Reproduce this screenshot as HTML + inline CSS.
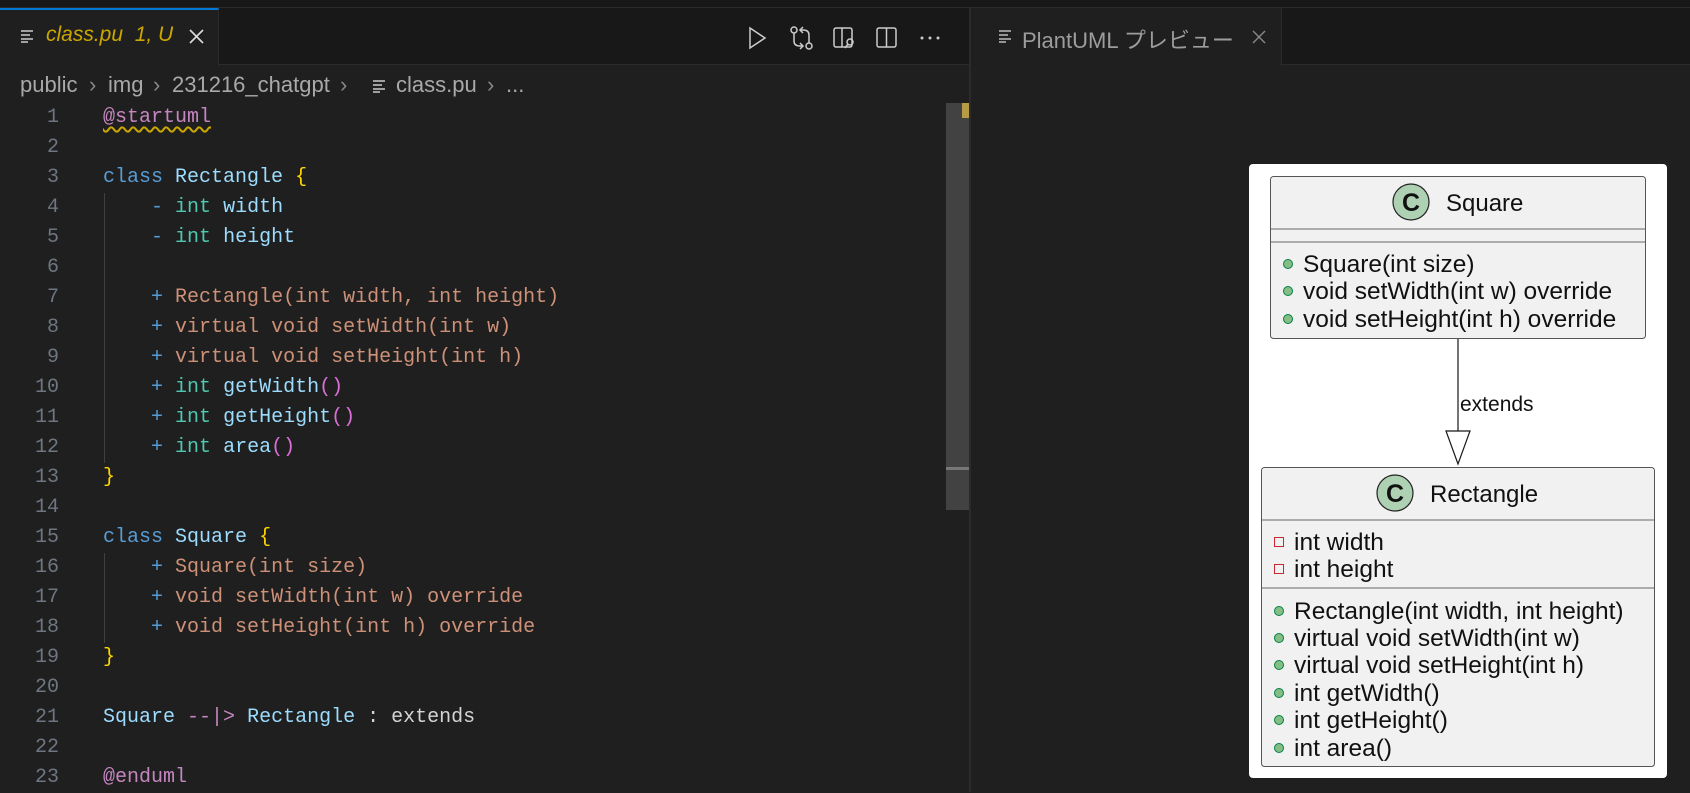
<!DOCTYPE html>
<html><head><meta charset="utf-8"><style>
*{margin:0;padding:0;box-sizing:border-box}
body{width:1690px;height:792px;background:#1f1f1f;overflow:hidden;position:relative;font-family:"Liberation Sans","Noto Sans CJK JP",sans-serif}
.abs{position:absolute}
.code{font-family:"Liberation Mono",monospace;font-size:20px;white-space:pre;color:#d4d4d4;line-height:30px}
.ln{position:absolute;left:0;width:59px;text-align:right;font-family:"Liberation Mono",monospace;font-size:20px;color:#6e7681;line-height:30px}
.k{color:#569cd6}.n{color:#9cdcfe}.b{color:#ffd700}.t{color:#4ec9b0}.s{color:#ce9178}.p{color:#da70d6}.m{color:#c586c0}
.bc{position:absolute;top:72px;font-size:22px;color:#a9a9a9;white-space:pre}
</style></head><body>
<div class="abs" style="left:0;top:0;width:1690px;height:8px;background:#181818;border-bottom:1px solid #2b2b2b"></div>
<div class="abs" style="left:0;top:8px;width:970px;height:57px;background:#181818;border-bottom:1px solid #2b2b2b"></div>
<div class="abs" style="left:970px;top:8px;width:720px;height:57px;background:#181818;border-bottom:1px solid #2b2b2b"></div>
<div class="abs" style="left:0;top:8px;width:219px;height:58px;background:#1f1f1f;border-top:2px solid #0078d4;border-right:1px solid #2b2b2b"></div>
<svg class="abs" style="left:20px;top:29px" width="16" height="14"><g stroke="#ccc" stroke-width="1.5"><line x1="1" y1="2" x2="13" y2="2"/><line x1="1" y1="6" x2="10" y2="6"/><line x1="1" y1="10" x2="13" y2="10"/><line x1="1" y1="13" x2="8" y2="13"/></g></svg>
<div class="abs" style="left:46px;top:23px;font-size:21px;font-style:italic;color:#cca700;white-space:pre">class.pu  1, U</div>
<svg class="abs" style="left:189px;top:29px" width="15" height="15"><g stroke="#ddd" stroke-width="1.6"><line x1="1" y1="1" x2="14" y2="14"/><line x1="14" y1="1" x2="1" y2="14"/></g></svg>
<svg class="abs" style="left:745px;top:25px" width="200" height="26" fill="none" stroke="#ccc" stroke-width="1.5">
<path d="M5 3 L20 13 L5 23 Z"/>
<circle cx="49" cy="5" r="3"/><path d="M49 8 V16 Q49 21 55 21 H58"/><path d="M55 18 L58 21 L55 24"/><circle cx="64" cy="21" r="3"/><path d="M64 18 V10 Q64 5 58 5 H55"/><path d="M58 2 L55 5 L58 8"/>
<rect x="89" y="3" width="18" height="19" rx="2"/><line x1="97" y1="3" x2="97" y2="22"/><circle cx="105" cy="17" r="3"/><line x1="103" y1="19" x2="100" y2="23"/>
<rect x="132" y="3" width="19" height="19" rx="2"/><line x1="141.5" y1="3" x2="141.5" y2="22"/>
<g fill="#ccc" stroke="none"><circle cx="177" cy="13" r="1.5"/><circle cx="185" cy="13" r="1.5"/><circle cx="193" cy="13" r="1.5"/></g>
</svg>
<div class="bc" style="left:20px">public</div>
<div class="bc" style="left:89px;color:#888">›</div>
<div class="bc" style="left:108px">img</div>
<div class="bc" style="left:153px;color:#888">›</div>
<div class="bc" style="left:172px">231216_chatgpt</div>
<div class="bc" style="left:340px;color:#888">›</div>
<div class="bc" style="left:396px">class.pu</div>
<div class="bc" style="left:487px;color:#888">›</div>
<div class="bc" style="left:506px">...</div>
<svg class="abs" style="left:372px;top:79px" width="16" height="14"><g stroke="#ccc" stroke-width="1.5"><line x1="1" y1="2" x2="13" y2="2"/><line x1="1" y1="6" x2="10" y2="6"/><line x1="1" y1="10" x2="13" y2="10"/><line x1="1" y1="13" x2="8" y2="13"/></g></svg>
<div class="abs" style="left:0;top:103px">
<div class="ln" style="top:0">1</div><div class="ln" style="top:30px">2</div><div class="ln" style="top:60px">3</div><div class="ln" style="top:90px">4</div><div class="ln" style="top:120px">5</div><div class="ln" style="top:150px">6</div><div class="ln" style="top:180px">7</div><div class="ln" style="top:210px">8</div><div class="ln" style="top:240px">9</div><div class="ln" style="top:270px">10</div><div class="ln" style="top:300px">11</div><div class="ln" style="top:330px">12</div><div class="ln" style="top:360px">13</div><div class="ln" style="top:390px">14</div><div class="ln" style="top:420px">15</div><div class="ln" style="top:450px">16</div><div class="ln" style="top:480px">17</div><div class="ln" style="top:510px">18</div><div class="ln" style="top:540px">19</div><div class="ln" style="top:570px">20</div><div class="ln" style="top:600px">21</div><div class="ln" style="top:630px">22</div><div class="ln" style="top:660px">23</div>
</div>
<div class="abs" style="left:104px;top:193px;width:1px;height:270px;background:#404040"></div>
<div class="abs" style="left:104px;top:553px;width:1px;height:90px;background:#404040"></div>
<div class="abs code" style="left:103px;top:103px"><span class="m" style="text-decoration:underline wavy #cca700;text-underline-offset:4px">@startuml</span>

<span class="k">class</span> <span class="n">Rectangle</span> <span class="b">{</span>
    <span class="k">-</span> <span class="t">int</span> <span class="n">width</span>
    <span class="k">-</span> <span class="t">int</span> <span class="n">height</span>

    <span class="k">+</span> <span class="s">Rectangle(int width, int height)</span>
    <span class="k">+</span> <span class="s">virtual void setWidth(int w)</span>
    <span class="k">+</span> <span class="s">virtual void setHeight(int h)</span>
    <span class="k">+</span> <span class="t">int</span> <span class="n">getWidth</span><span class="p">()</span>
    <span class="k">+</span> <span class="t">int</span> <span class="n">getHeight</span><span class="p">()</span>
    <span class="k">+</span> <span class="t">int</span> <span class="n">area</span><span class="p">()</span>
<span class="b">}</span>

<span class="k">class</span> <span class="n">Square</span> <span class="b">{</span>
    <span class="k">+</span> <span class="s">Square(int size)</span>
    <span class="k">+</span> <span class="s">void setWidth(int w) override</span>
    <span class="k">+</span> <span class="s">void setHeight(int h) override</span>
<span class="b">}</span>

<span class="n">Square</span> <span class="m">--|&gt;</span> <span class="n">Rectangle</span> : extends

<span class="m">@enduml</span></div>
<div class="abs" style="left:946px;top:103px;width:23px;height:407px;background:#424242"></div>
<div class="abs" style="left:962px;top:103px;width:7px;height:15px;background:#b89b45"></div>
<div class="abs" style="left:946px;top:467px;width:23px;height:3px;background:#777"></div>
<div class="abs" style="left:969px;top:8px;width:2px;height:784px;background:#2b2b2b"></div>
<div class="abs" style="left:971px;top:8px;width:311px;height:58px;background:#1f1f1f;border-right:1px solid #2b2b2b"></div>
<svg class="abs" style="left:998px;top:29px" width="16" height="14"><g stroke="#bbb" stroke-width="1.5"><line x1="1" y1="2" x2="13" y2="2"/><line x1="1" y1="6" x2="10" y2="6"/><line x1="1" y1="10" x2="13" y2="10"/><line x1="1" y1="13" x2="8" y2="13"/></g></svg>
<div class="abs" style="left:1022px;top:23px;font-size:22px;color:#9d9d9d;white-space:nowrap">PlantUML プレビュー</div>
<svg class="abs" style="left:1252px;top:30px" width="14" height="14"><g stroke="#888" stroke-width="1.4"><line x1="1" y1="1" x2="13" y2="13"/><line x1="13" y1="1" x2="1" y2="13"/></g></svg>
<svg class="abs" style="left:0;top:0" width="1690" height="792" font-family="Liberation Sans, sans-serif">
<rect x="1249" y="164" width="418" height="614" rx="4" fill="#fff"/>
<rect x="1270.5" y="176.5" width="375" height="162" rx="3" fill="#f1f1f1" stroke="#555" stroke-width="1"/>
<line x1="1271" y1="229" x2="1645" y2="229" stroke="#666"/>
<line x1="1271" y1="242" x2="1645" y2="242" stroke="#666"/>
<circle cx="1411" cy="202" r="18" fill="#add1b2" stroke="#222" stroke-width="1.2"/>
<text x="1411" y="211" font-size="25" font-weight="bold" text-anchor="middle" fill="#111">C</text>
<text x="1446" y="211" font-size="24" fill="#111">Square</text>
<g fill="#84be84" stroke="#038048"><circle cx="1288" cy="264" r="4.5"/><circle cx="1288" cy="291" r="4.5"/><circle cx="1288" cy="319" r="4.5"/></g>
<g font-size="24.5" fill="#111">
<text x="1303" y="272">Square(int size)</text>
<text x="1303" y="299">void setWidth(int w) override</text>
<text x="1303" y="327">void setHeight(int h) override</text>
</g>
<line x1="1458" y1="339" x2="1458" y2="431" stroke="#181818" stroke-width="1.2"/>
<path d="M1446 431 L1470 431 L1458 464 Z" fill="#fff" stroke="#181818" stroke-width="1.2"/>
<text x="1460" y="411" font-size="21" fill="#111">extends</text>
<rect x="1261.5" y="467.5" width="393" height="299" rx="3" fill="#f1f1f1" stroke="#555" stroke-width="1"/>
<line x1="1262" y1="520" x2="1654" y2="520" stroke="#666"/>
<line x1="1262" y1="588" x2="1654" y2="588" stroke="#666"/>
<circle cx="1395" cy="493" r="18" fill="#add1b2" stroke="#222" stroke-width="1.2"/>
<text x="1395" y="502" font-size="25" font-weight="bold" text-anchor="middle" fill="#111">C</text>
<text x="1430" y="502" font-size="24" fill="#111">Rectangle</text>
<g fill="none" stroke="#c82930"><rect x="1274.5" y="537.5" width="9" height="9"/><rect x="1274.5" y="564.5" width="9" height="9"/></g>
<g fill="#84be84" stroke="#038048"><circle cx="1279" cy="611" r="4.5"/><circle cx="1279" cy="638" r="4.5"/><circle cx="1279" cy="665" r="4.5"/><circle cx="1279" cy="693" r="4.5"/><circle cx="1279" cy="720" r="4.5"/><circle cx="1279" cy="748" r="4.5"/></g>
<g font-size="24.5" fill="#111">
<text x="1294" y="550">int width</text>
<text x="1294" y="577">int height</text>
<text x="1294" y="619">Rectangle(int width, int height)</text>
<text x="1294" y="646">virtual void setWidth(int w)</text>
<text x="1294" y="673">virtual void setHeight(int h)</text>
<text x="1294" y="701">int getWidth()</text>
<text x="1294" y="728">int getHeight()</text>
<text x="1294" y="756">int area()</text>
</g>
</svg>
</body></html>
